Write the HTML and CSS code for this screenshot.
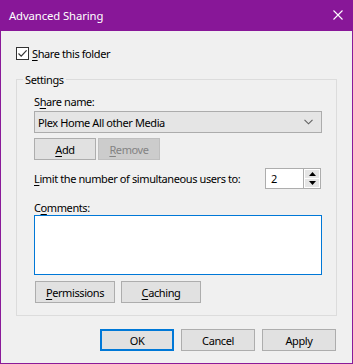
FILE: index.html
```html
<!DOCTYPE html>
<html lang="en">
<head>
    <meta charset="UTF-8">
    <title>Advanced Sharing</title>
    <link rel="stylesheet" href="styles.css">
</head>
<body>
    <div class="window">
        <div class="titlebar">
            <span class="title">Advanced Sharing</span>
            <svg class="close" width="10" height="10" viewBox="0 0 10 10">
                <path d="M0.5 0.5 L9.5 9.5 M9.5 0.5 L0.5 9.5" stroke="#fff" stroke-width="1.1" fill="none"/>
            </svg>
        </div>
        <div class="content">
            <label class="check-row">
                <span class="checkbox">
                    <svg width="11" height="11" viewBox="0 0 11 11">
                        <path d="M1.5 5.5 L4.2 8.2 L9.6 2.4" stroke="#333" stroke-width="1.2" fill="none"/>
                    </svg>
                </span>
                <span><u>S</u>hare this folder</span>
            </label>

            <fieldset class="group">
                <legend>Settings</legend>
                <div class="label">S<u>h</u>are name:</div>
                <div class="combo">
                    <span>Plex Home All other Media</span>
                    <svg width="9" height="6" viewBox="0 0 9 6">
                        <path d="M0.5 0.8 L4.5 4.8 L8.5 0.8" stroke="#606060" stroke-width="1.1" fill="none"/>
                    </svg>
                </div>
                <div class="btn-row">
                    <button class="btn small"><u>A</u>dd</button>
                    <button class="btn small" disabled><u>R</u>emove</button>
                </div>
                <div class="limit-row">
                    <span><u>L</u>imit the number of simultaneous users to:</span>
                    <div class="spinner">
                        <span class="spin-value">2</span>
                        <div class="spin-arrows">
                            <span class="arrow"><svg width="7" height="4" viewBox="0 0 7 4"><path d="M0 4 L3.5 0 L7 4 Z" fill="#000"/></svg></span>
                            <span class="arrow"><svg width="7" height="4" viewBox="0 0 7 4"><path d="M0 0 L3.5 4 L7 0 Z" fill="#000"/></svg></span>
                        </div>
                    </div>
                </div>
                <div class="label comments-label">C<u>o</u>mments:</div>
                <div class="comments"></div>
                <div class="btn-row bottom">
                    <button class="btn wide"><u>P</u>ermissions</button>
                    <button class="btn wide"><u>C</u>aching</button>
                </div>
            </fieldset>

            <div class="dialog-buttons">
                <button class="btn dlg default">OK</button>
                <button class="btn dlg">Cancel</button>
                <button class="btn dlg">Apply</button>
            </div>
        </div>
    </div>
</body>
</html>
```

FILE: styles.css
```css
* {
    box-sizing: border-box;
}
body {
    margin: 0;
    font-family: "Noto Sans", "Liberation Sans", sans-serif;
    font-size: 11px;
    letter-spacing: -0.4px;
    color: #000;
}
u {
    text-decoration-thickness: 1px;
    text-underline-offset: 2px;
}
.window {
    width: 353px;
    height: 364px;
    background-color: #f0f0f0;
    border: 1px solid #8a1a99;
    border-top: none;
    display: flex;
    flex-direction: column;
}
.titlebar {
    height: 31px;
    background-color: #881798;
    margin: 0 -1px;
    display: flex;
    align-items: center;
    justify-content: space-between;
    padding: 0 10px 1px 9px;
}
.title {
    color: #fff;
    font-size: 11.3px;
    letter-spacing: -0.1px;
}
.close {
    display: block;
}
.content {
    padding: 0 15px 0 15px;
    display: flex;
    flex-direction: column;
}
.check-row {
    display: flex;
    align-items: center;
    gap: 3px;
    margin-top: 16px;
    height: 13px;
}
.checkbox {
    width: 13px;
    height: 13px;
    border: 1px solid #333;
    background-color: #fff;
    display: flex;
    align-items: center;
    justify-content: center;
}
.checkbox svg {
    display: block;
}
.group {
    margin: 12px 0 0 0;
    padding: 4px 14px 12px 17px;
    border: 1px solid #dcdcdc;
    height: 244px;
    min-width: 0;
}
.group legend {
    padding: 0 2px;
    margin-left: -11px;
    line-height: 15px;
}
.label {
    line-height: 15px;
    height: 15px;
    margin-top: 3px;
}
.combo {
    margin-top: 2px;
    height: 22px;
    background-color: #e5e5e5;
    border: 1px solid #acacac;
    display: flex;
    align-items: center;
    justify-content: space-between;
    padding: 0 8px 0 3px;
}
.combo svg {
    display: block;
}
.btn-row {
    display: flex;
    gap: 2px;
    margin-top: 5px;
}
.btn {
    height: 22px;
    font-family: inherit;
    font-size: 11px;
    letter-spacing: -0.4px;
    color: #000;
    background-color: #e1e1e1;
    border: 1px solid #adadad;
    padding: 0;
}
.btn:disabled {
    background-color: #cccccc;
    border-color: #bfbfbf;
    color: #838383;
}
.small {
    width: 62px;
}
.wide {
    width: 80px;
}
.bottom {
    margin-top: 6px;
    gap: 6px;
    padding-left: 1px;
}
.limit-row {
    display: flex;
    align-items: center;
    justify-content: space-between;
    margin-top: 8px;
    height: 21px;
    padding-right: 1px;
    white-space: nowrap;
}
.spinner {
    display: flex;
    width: 56px;
    height: 21px;
    border: 1px solid #adadad;
    background-color: #fff;
}
.spin-value {
    flex: 1;
    padding-left: 5px;
    line-height: 19px;
    border-right: 1px solid #adadad;
}
.spin-arrows {
    width: 16px;
    display: flex;
    flex-direction: column;
    gap: 1px;
    padding: 1px;
    background-color: #fff;
}
.arrow {
    flex: 1;
    background-color: #e5e5e5;
    display: flex;
    align-items: center;
    justify-content: center;
}
.arrow svg {
    display: block;
}
.comments-label {
    margin-top: 11px;
}
.comments {
    height: 60px;
    background-color: #fff;
    border: 1px solid #0078d7;
}
.dialog-buttons {
    display: flex;
    justify-content: flex-end;
    gap: 7px;
    margin-top: 13px;
    padding-right: 1px;
}
.dlg {
    width: 74px;
}
.default {
    border: 2px solid #0078d7;
}
```
